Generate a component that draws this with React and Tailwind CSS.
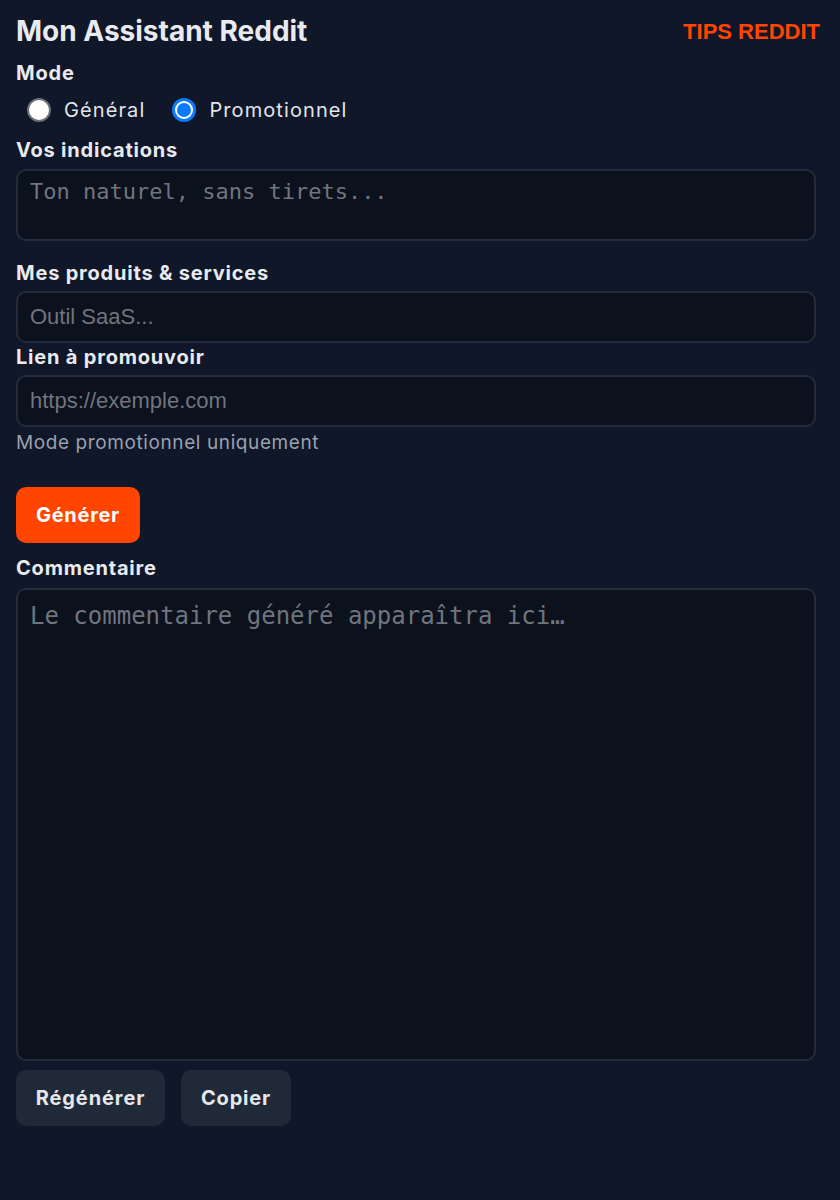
import { useState } from "react";

const sans = "font-['Inter','Noto_Sans',sans-serif]";

function Radio({ checked, label, onClick }) {
  return (
    <button type="button" onClick={onClick} className="flex items-center gap-[13px]">
      {checked ? (
        <span className="w-6 h-6 rounded-full bg-[#0a7aff] p-[3px]">
          <span className="block w-full h-full rounded-full bg-white p-[2px]">
            <span className="block w-full h-full rounded-full bg-[#0a7aff]" />
          </span>
        </span>
      ) : (
        <span className="w-6 h-6 rounded-full bg-white border-2 border-[#6b6f76]" />
      )}
      <span className="text-[20px] leading-6 tracking-[1.1px] text-[#e2e5ea]">{label}</span>
    </button>
  );
}

export default function App() {
  const [mode, setMode] = useState("promo");

  return (
    <div className={`${sans} min-h-screen bg-[#0f1729] pl-4 pr-5 pt-[15px] pb-[74px]`}>
      <div className="flex items-center justify-between h-8">
        <h1 className="text-[28px] leading-8 font-bold text-[#e8eaee]">Mon Assistant Reddit</h1>
        <span className="font-['Liberation_Sans',Arial,sans-serif] font-bold text-[22px] text-[#ff4500]">TIPS REDDIT</span>
      </div>

      <label className="block mt-[14px] text-[20px] leading-6 font-bold tracking-[0.8px] text-[#e8eaee]">Mode</label>
      <div className="mt-[11px] h-7 flex items-center gap-[27px] pl-[11px]">
        <Radio label="Général" checked={mode === "general"} onClick={() => setMode("general")} />
        <Radio label="Promotionnel" checked={mode === "promo"} onClick={() => setMode("promo")} />
      </div>

      <div className="mr-1">
        <label className="block mt-[14px] text-[20px] leading-6 font-bold tracking-[0.8px] text-[#e8eaee]">Vos indications</label>
        <textarea
          placeholder="Ton naturel, sans tirets..."
          className="mt-[7px] block w-full h-[72px] resize-none rounded-[10px] border-2 border-[#222c3d] bg-[#0b111d] px-3 py-[7px] font-['DejaVu_Sans_Mono',monospace] text-[22px] leading-7 text-[#e2e5ea] placeholder:text-[#70757d] outline-none"
        />

        <label className="block mt-[20px] text-[20px] leading-6 font-bold tracking-[0.8px] text-[#e8eaee]">Mes produits &amp; services</label>
        <input
          placeholder="Outil SaaS..."
          className="mt-[6px] block w-full h-[52px] rounded-[10px] border-2 border-[#222c3d] bg-[#0b111d] px-3 font-['Liberation_Sans',Arial,sans-serif] text-[22px] text-[#e2e5ea] placeholder:text-[#70757d] outline-none"
        />

        <label className="block mt-[2px] text-[20px] leading-6 font-bold tracking-[0.8px] text-[#e8eaee]">Lien à promouvoir</label>
        <input
          placeholder="https://exemple.com"
          className="mt-[6px] block w-full h-[52px] rounded-[10px] border-2 border-[#222c3d] bg-[#0b111d] px-3 font-['Liberation_Sans',Arial,sans-serif] text-[22px] text-[#e2e5ea] placeholder:text-[#70757d] outline-none"
        />
        <p className="mt-[5px] text-[19px] leading-[22px] tracking-[0.6px] text-[#9aa1ab]">Mode promotionnel uniquement</p>

        <button className="mt-[33px] h-14 w-[124px] rounded-[10px] bg-[#ff4500] text-[20px] font-bold tracking-[0.7px] text-white">
          Générer
        </button>

        <label className="block mt-[13px] text-[20px] leading-6 font-bold tracking-[0.8px] text-[#e8eaee]">Commentaire</label>
        <textarea
          placeholder="Le commentaire généré apparaîtra ici…"
          className="mt-[8px] block w-full h-[473px] resize-none rounded-[10px] border-2 border-[#222c3d] bg-[#0b111d] px-3 py-[10px] font-['DejaVu_Sans_Mono',monospace] text-[24px] leading-8 text-[#e2e5ea] placeholder:text-[#70757d] outline-none"
        />

        <div className="mt-[9px] flex gap-4">
          <button className="h-14 w-[149px] rounded-[10px] bg-[#1f2937] text-[20px] font-bold tracking-[0.9px] text-[#e5e7eb]">
            Régénérer
          </button>
          <button className="h-14 w-[110px] rounded-[10px] bg-[#1f2937] text-[20px] font-bold tracking-[0.8px] text-[#e5e7eb]">
            Copier
          </button>
        </div>
      </div>
    </div>
  );
}
